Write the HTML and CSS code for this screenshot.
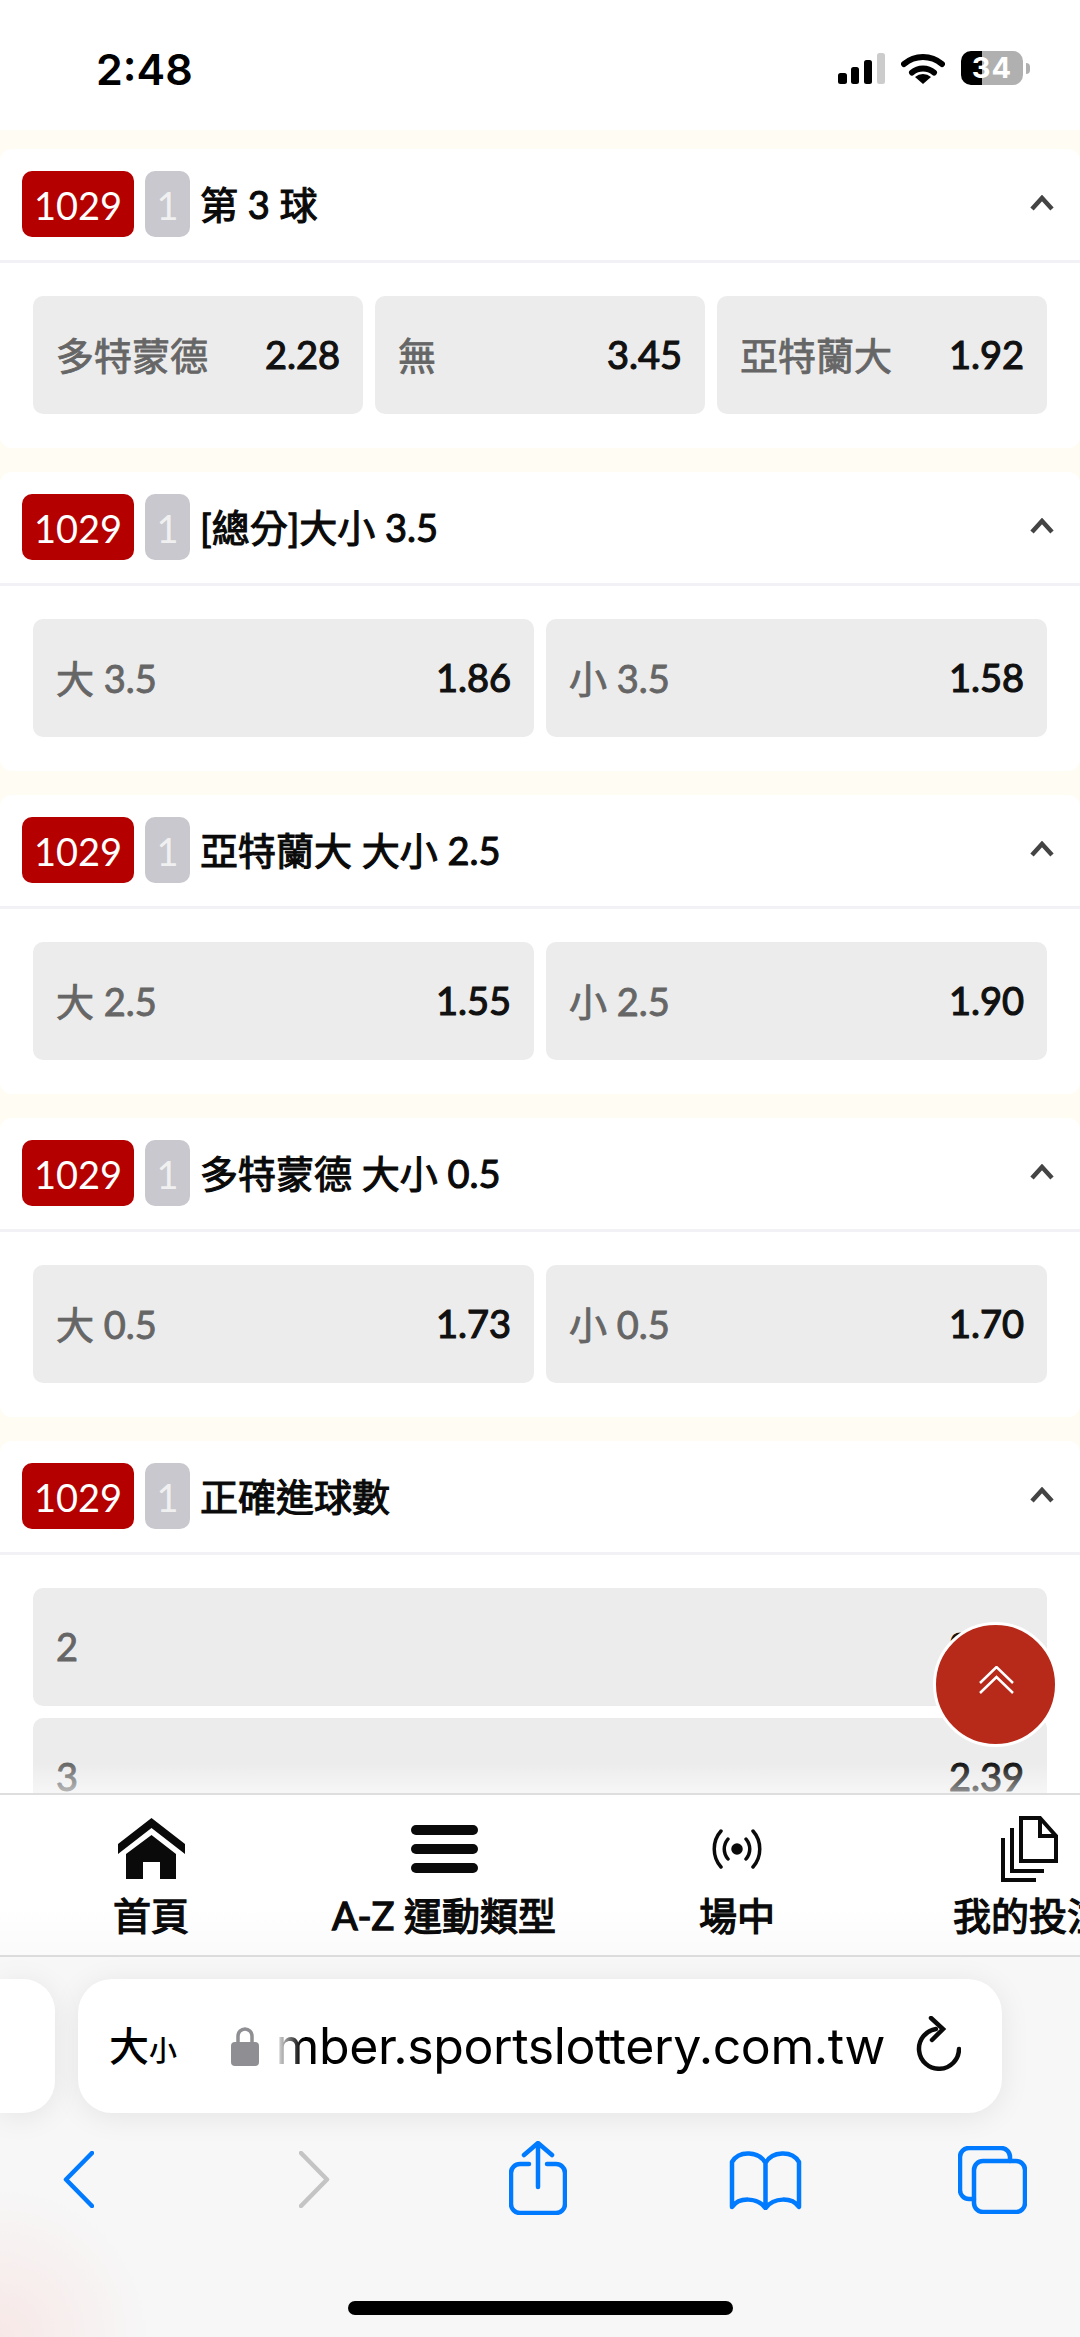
FILE: index.html
```html
<!DOCTYPE html>
<html lang="zh-Hant">
<head>
  <meta charset="UTF-8" />
  <title>運彩投注</title>
  <link rel="stylesheet" href="styles.css">
</head>
<body>
<div class="screen">

  <div class="status-bar">
    <span class="clock">2:48</span>
    <div class="status-icons">
      <svg class="ico-signal" viewBox="0 0 47 31">
        <rect x="0" y="20" width="9" height="11" rx="2.5" fill="#000"/>
        <rect x="13" y="14" width="8" height="17" rx="2.5" fill="#000"/>
        <rect x="26" y="7" width="8" height="24" rx="2.5" fill="#000"/>
        <rect x="39" y="0" width="8" height="31" rx="2.5" fill="#ccc"/>
      </svg>
      <svg class="ico-wifi" viewBox="0 0 44 32">
        <path d="M3 12 A29 29 0 0 1 41 12" fill="none" stroke="#000" stroke-width="6" stroke-linecap="round"/>
        <path d="M11 20.5 A17 17 0 0 1 33 20.5" fill="none" stroke="#000" stroke-width="6" stroke-linecap="round"/>
        <path d="M22 32 L14 25 A12 12 0 0 1 30 25 Z" fill="#000"/>
      </svg>
      <div class="battery"><span>34</span></div>
      <div class="battery-nub"></div>
    </div>
  </div>

  <div class="content">
    <section class="market">
      <div class="market-head">
        <span class="code">1029</span><span class="num">1</span>
        <span class="title">第 3 球</span>
        <svg class="ico-up" viewBox="0 0 26 17"><path d="M3 14 L13 3 L23 14" /></svg>
      </div>
      <div class="market-body">
        <div class="opts three">
          <div class="opt"><span class="name">多特蒙德</span><span class="odds">2.28</span></div>
          <div class="opt"><span class="name">無</span><span class="odds">3.45</span></div>
          <div class="opt"><span class="name">亞特蘭大</span><span class="odds">1.92</span></div>
        </div>
      </div>
    </section>

    <section class="market">
      <div class="market-head">
        <span class="code">1029</span><span class="num">1</span>
        <span class="title">[總分]大小 3.5</span>
        <svg class="ico-up" viewBox="0 0 26 17"><path d="M3 14 L13 3 L23 14" /></svg>
      </div>
      <div class="market-body">
        <div class="opts two">
          <div class="opt"><span class="name">大 3.5</span><span class="odds">1.86</span></div>
          <div class="opt"><span class="name">小 3.5</span><span class="odds">1.58</span></div>
        </div>
      </div>
    </section>

    <section class="market">
      <div class="market-head">
        <span class="code">1029</span><span class="num">1</span>
        <span class="title">亞特蘭大 大小 2.5</span>
        <svg class="ico-up" viewBox="0 0 26 17"><path d="M3 14 L13 3 L23 14" /></svg>
      </div>
      <div class="market-body">
        <div class="opts two">
          <div class="opt"><span class="name">大 2.5</span><span class="odds">1.55</span></div>
          <div class="opt"><span class="name">小 2.5</span><span class="odds">1.90</span></div>
        </div>
      </div>
    </section>

    <section class="market">
      <div class="market-head">
        <span class="code">1029</span><span class="num">1</span>
        <span class="title">多特蒙德 大小 0.5</span>
        <svg class="ico-up" viewBox="0 0 26 17"><path d="M3 14 L13 3 L23 14" /></svg>
      </div>
      <div class="market-body">
        <div class="opts two">
          <div class="opt"><span class="name">大 0.5</span><span class="odds">1.73</span></div>
          <div class="opt"><span class="name">小 0.5</span><span class="odds">1.70</span></div>
        </div>
      </div>
    </section>

    <section class="market">
      <div class="market-head">
        <span class="code">1029</span><span class="num">1</span>
        <span class="title">正確進球數</span>
        <svg class="ico-up" viewBox="0 0 26 17"><path d="M3 14 L13 3 L23 14" /></svg>
      </div>
      <div class="market-body">
        <div class="opts one">
          <div class="opt"><span class="name">2</span><span class="odds">2.70</span></div>
          <div class="opt"><span class="name">3</span><span class="odds">2.39</span></div>
        </div>
      </div>
    </section>

    <button class="to-top">
      <svg class="ico-top" viewBox="0 0 35 28">
        <path d="M1 17 L17.5 1 L34 17" />
        <path d="M1 27 L17.5 11 L34 27" />
      </svg>
    </button>
  </div>

  <nav class="tabs">
    <a class="tab">
      <svg class="ico-home" viewBox="0 0 67 61">
        <path d="M33.5 0 L67 26 V36 L33.5 10 L0 36 V26 Z" fill="#0a0a0a"/>
        <path d="M33.5 17 L58 36 V61 H42 V44 H25 V61 H8 V36 Z" fill="#0a0a0a"/>
      </svg>
      <span>首頁</span>
    </a>
    <a class="tab">
      <svg class="ico-menu" viewBox="0 0 67 48">
        <rect x="0" y="0" width="67" height="10" rx="5" fill="#0a0a0a"/>
        <rect x="0" y="19" width="67" height="10" rx="5" fill="#0a0a0a"/>
        <rect x="0" y="38" width="67" height="10" rx="5" fill="#0a0a0a"/>
      </svg>
      <span>A-Z 運動類型</span>
    </a>
    <a class="tab">
      <svg class="ico-live" viewBox="0 0 50 40">
        <circle cx="25" cy="20" r="4" fill="#0a0a0a"/>
        <path d="M9 2 C0 12 0 28 9 38 M16 10 C11 16 11 24 16 30 M41 2 C50 12 50 28 41 38 M34 10 C39 16 39 24 34 30" />
      </svg>
      <span>場中</span>
    </a>
    <a class="tab">
      <svg class="ico-bets" viewBox="0 0 57 66">
        <path d="M20 2 H39 L55 20 V45 H20 Z M39 2 V20 H55 M11 12 V55 H43 M2 22 V64 H35" />
      </svg>
      <span>我的投注</span>
    </a>
  </nav>

  <div class="safari">
    <div class="pill-row">
      <div class="pill-prev"></div>
      <div class="pill-url">
        <span class="aa">大<small>小</small></span>
        <svg class="ico-lock" viewBox="0 0 28 40">
          <path d="M7 18 V10 A7 7 0 0 1 21 10 V18" fill="none" stroke="#8e8e93" stroke-width="3.5"/>
          <rect x="0" y="16" width="28" height="24" rx="4" fill="#8e8e93"/>
        </svg>
        <div class="url"><span>member.sportslottery.com.tw</span></div>
        <svg class="ico-reload" viewBox="0 0 45 55">
          <path d="M20 13 A20 20 0 1 0 43 33" />
          <path d="M15 2 L27 13 L16 24" />
        </svg>
      </div>
    </div>
    <div class="toolbar">
      <svg class="ico-back" viewBox="0 0 31 57"><path d="M29 2 L3 28.5 L29 55" /></svg>
      <svg class="ico-fwd" viewBox="0 0 31 57"><path d="M2 2 L28 28.5 L2 55" /></svg>
      <svg class="ico-share" viewBox="0 0 58 74">
        <path d="M20 23 H11 A9 9 0 0 0 2 32 V63 A9 9 0 0 0 11 72 H47 A9 9 0 0 0 56 63 V32 A9 9 0 0 0 47 23 H38" />
        <path d="M29 46 V3 M15 14 L29 2 L43 14" />
      </svg>
      <svg class="ico-book" viewBox="0 0 73 60">
        <path d="M36.5 13 C30 1 10 0 3 12 V57 C10 47 28 47 36.5 58 C45 47 63 47 70 57 V12 C63 0 43 1 36.5 13 V58" />
      </svg>
      <svg class="ico-pages" viewBox="0 0 69 68">
        <path d="M52 15 V11 A9 9 0 0 0 43 2 H11 A9 9 0 0 0 2 11 V44 A9 9 0 0 0 11 53 H16" />
        <rect x="16" y="15" width="51" height="51" rx="9" />
      </svg>
    </div>
    <div class="home-bar"></div>
  </div>

</div>
</body>
</html>
```

FILE: styles.css
```css
* {
  box-sizing: border-box;
}
body {
  margin: 0;
  font-family: Lato, "Noto Sans CJK TC", sans-serif;
  background: white;
}
.screen {
  width: 1080px;
  height: 2337px;
  display: flex;
  flex-direction: column;
  overflow: hidden;
}

/* status bar */
.status-bar {
  height: 130px;
  flex-shrink: 0;
  background: white;
  display: flex;
  justify-content: space-between;
  padding: 44px 50px 0 96px;
}
.clock {
  font-family: Inter, sans-serif;
  font-size: 43px;
  font-weight: 600;
  line-height: 50px;
  height: 50px;
  color: #000;
}
.status-icons {
  display: flex;
  align-items: flex-start;
  height: 40px;
  padding-top: 8px;
}
.ico-signal {
  width: 47px;
  height: 31px;
  margin-top: 1px;
}
.ico-wifi {
  width: 44px;
  height: 32px;
  margin-left: 16px;
}
.battery {
  width: 62px;
  height: 34px;
  margin-left: 16px;
  margin-top: -1px;
  border-radius: 10px;
  background: linear-gradient(to right, #000 34%, #b0b0b0 34%);
  color: white;
  font-family: Inter, sans-serif;
  font-size: 29px;
  font-weight: 700;
  letter-spacing: 1px;
  line-height: 34px;
  text-align: center;
}
.battery-nub {
  width: 4px;
  height: 11px;
  margin: 11px 0 0 3px;
  background: #b0b0b0;
  border-radius: 0 4px 4px 0;
}

/* markets */
.content {
  flex: 1;
  position: relative;
  overflow: hidden;
  background: #fffdf3;
  padding-top: 19px;
  display: flex;
  flex-direction: column;
  gap: 24px;
}
.content::after {
  content: "";
  position: absolute;
  left: 0;
  right: 0;
  bottom: 0;
  height: 30px;
  background: linear-gradient(rgba(255,255,255,0), rgba(255,255,255,0.55));
}
.market {
  background: white;
  border-radius: 12px;
  flex-shrink: 0;
  height: 299px;
}
.market:last-of-type {
  height: 500px;
}
.market-head {
  height: 114px;
  border-bottom: 3px solid #f2f2f6;
  display: flex;
  align-items: center;
  padding: 0 25px 2px 22px;
}
.code {
  width: 112px;
  height: 66px;
  line-height: 69px;
  background: #b50000;
  color: white;
  font-size: 38px;
  text-align: center;
  border-radius: 10px;
}
.num {
  width: 45px;
  height: 66px;
  line-height: 69px;
  margin-left: 11px;
  background: #c8c8ce;
  color: #f0f0f0;
  font-size: 38px;
  text-align: center;
  border-radius: 10px;
}
.title {
  margin-left: 10px;
  margin-bottom: 3px;
  flex: 1;
  font-size: 38px;
  -webkit-text-stroke: 1.1px #0a0a0a;
  color: #0a0a0a;
}
.ico-up {
  width: 26px;
  height: 17px;
  fill: none;
  stroke: #444;
  stroke-width: 4.5;
}
.market-body {
  padding: 33px 33px 0;
}
.opts {
  display: grid;
  gap: 12px;
}
.opts.three {
  grid-template-columns: repeat(3, 1fr);
}
.opts.two {
  grid-template-columns: repeat(2, 1fr);
}
.opts.one {
  grid-template-columns: 1fr;
}
.opt {
  height: 118px;
  background: #ececec;
  border-radius: 10px;
  padding: 0 23px 3px;
  display: flex;
  justify-content: space-between;
  align-items: center;
  font-size: 38px;
}
.name {
  color: #666;
  -webkit-text-stroke: 0.9px #666;
}
.odds {
  color: #111;
  -webkit-text-stroke: 1.2px #111;
}
.to-top {
  position: absolute;
  left: 933px;
  top: 1492px;
  width: 125px;
  height: 125px;
  padding: 0;
  border: 3px solid white;
  border-radius: 50%;
  background: #b72a1a;
  display: flex;
  justify-content: center;
  align-items: center;
  z-index: 1;
}
.ico-top {
  width: 35px;
  height: 28px;
  margin: 0 0 10px 2px;
  fill: none;
  stroke: white;
  stroke-width: 2.5;
}

/* bottom tabs */
.tabs {
  height: 164px;
  flex-shrink: 0;
  border-top: 2px solid #dedede;
  border-bottom: 2px solid #dcdcdc;
  background: linear-gradient(white 70%, #fafafa);
  display: grid;
  grid-template-columns: 294px 292px 294px 290px;
  padding-left: 4px;
  white-space: nowrap;
}
.tab {
  display: flex;
  flex-direction: column;
  align-items: center;
  position: relative;
  height: 160px;
  color: #0a0a0a;
  font-size: 38px;
  -webkit-text-stroke: 1.3px #0a0a0a;
}
.tab svg {
  position: absolute;
}
.tab span {
  position: absolute;
  top: 95px;
  line-height: 50px;
}
.ico-home {
  top: 23px;
  width: 67px;
  height: 61px;
}
.ico-menu {
  top: 30px;
  width: 67px;
  height: 48px;
}
.ico-live {
  top: 34px;
  width: 50px;
  height: 40px;
  fill: none;
  stroke: #0a0a0a;
  stroke-width: 3.5;
  stroke-linecap: round;
}
.ico-bets {
  top: 21px;
  width: 57px;
  height: 66px;
  fill: none;
  stroke: #0a0a0a;
  stroke-width: 4;
}

/* safari chrome */
.safari {
  height: 380px;
  flex-shrink: 0;
  background: radial-gradient(circle 150px at 0 100%, #f7e8e7, #f7f7f7 100%);
  padding-top: 22px;
}
.pill-row {
  display: flex;
  height: 134px;
  gap: 23px;
}
.pill-prev {
  width: 55px;
  background: white;
  border-radius: 0 32px 32px 0;
  box-shadow: 0 4px 30px rgba(0,0,0,0.08);
}
.pill-url {
  width: 924px;
  background: white;
  border-radius: 34px;
  box-shadow: 0 4px 30px rgba(0,0,0,0.08);
  display: flex;
  align-items: center;
  padding-left: 31px;
  color: #000;
}
.aa {
  font-family: "Noto Sans CJK TC", sans-serif;
  font-size: 40px;
  font-weight: 500;
  width: 122px;
  line-height: 50px;
}
.aa small {
  font-size: 28px;
}
.ico-lock {
  width: 28px;
  height: 40px;
  flex-shrink: 0;
}
.url {
  width: 617px;
  margin-left: 9px;
  flex-shrink: 0;
  display: flex;
  justify-content: flex-end;
  overflow: hidden;
  white-space: nowrap;
  font-family: Inter, sans-serif;
  font-size: 50px;
  letter-spacing: -0.4px;
  -webkit-mask-image: linear-gradient(to right, transparent 6px, black 34px);
  mask-image: linear-gradient(to right, transparent 6px, black 34px);
}
.ico-reload {
  width: 45px;
  height: 55px;
  flex-shrink: 0;
  margin-left: 31px;
  margin-top: -6px;
  fill: none;
  stroke: #0a0a0a;
  stroke-width: 4.5;
  stroke-linecap: round;
}
.toolbar {
  position: relative;
  height: 160px;
}
.toolbar svg {
  position: absolute;
  fill: none;
  stroke: #007aff;
  stroke-width: 4.5;
  stroke-linecap: round;
  stroke-linejoin: round;
}
.ico-back {
  left: 63px;
  top: 38px;
  width: 31px;
  height: 57px;
}
.toolbar .ico-fwd {
  left: 299px;
  top: 38px;
  width: 31px;
  height: 57px;
  stroke: #c4c4c4;
}
.ico-share {
  left: 509px;
  top: 28px;
  width: 58px;
  height: 74px;
}
.ico-book {
  left: 729px;
  top: 37px;
  width: 73px;
  height: 60px;
}
.ico-pages {
  left: 958px;
  top: 33px;
  width: 69px;
  height: 68px;
}
.home-bar {
  width: 385px;
  height: 14px;
  margin: 28px 0 0 348px;
  background: black;
  border-radius: 7px;
}
```
